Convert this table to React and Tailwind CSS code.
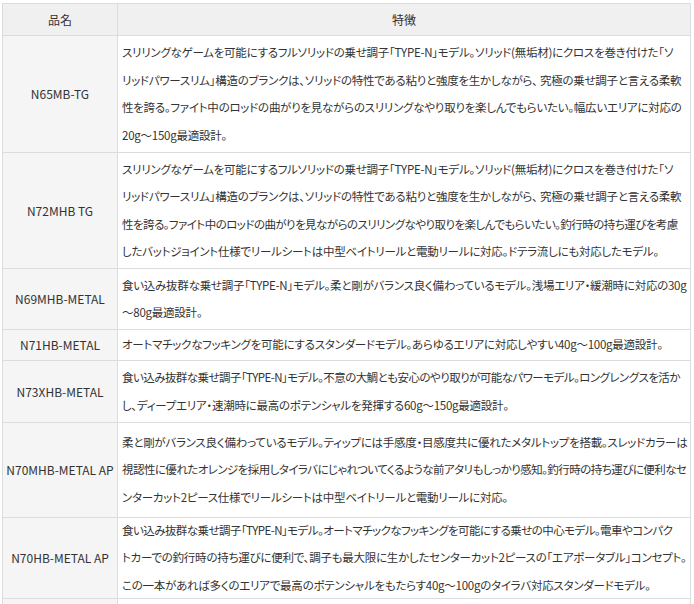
import React from 'react';

// lines prefixed with '~' are squeezed a little so they stay on one line like the reference
const rows = [
    {
        name: 'N65MB-TG',
        h: 'h-[116px]',
        lines: [
            'スリリングなゲームを可能にするフルソリッドの乗せ調子「TYPE-N」モデル。ソリッド(無垢材)にクロスを巻き付けた「ソ',
            'リッドパワースリム」構造のブランクは、ソリッドの特性である粘りと強度を生かしながら、 究極の乗せ調子と言える柔軟',
            '性を誇る。ファイト中のロッドの曲がりを見ながらのスリリングなやり取りを楽しんでもらいたい。幅広いエリアに対応の',
            '20g～150g最適設計。',
        ],
    },
    {
        name: 'N72MHB TG',
        h: 'h-[115px]',
        lines: [
            'スリリングなゲームを可能にするフルソリッドの乗せ調子「TYPE-N」モデル。ソリッド(無垢材)にクロスを巻き付けた「ソ',
            'リッドパワースリム」構造のブランクは、ソリッドの特性である粘りと強度を生かしながら、 究極の乗せ調子と言える柔軟',
            '~性を誇る。ファイト中のロッドの曲がりを見ながらのスリリングなやり取りを楽しんでもらいたい。釣行時の持ち運びを考慮',
            'したバットジョイント仕様でリールシートは中型ベイトリールと電動リールに対応。ドテラ流しにも対応したモデル。',
        ],
    },
    {
        name: 'N69MHB-METAL',
        h: 'h-[60px]',
        lines: [
            '食い込み抜群な乗せ調子「TYPE-N」モデル。柔と剛がバランス良く備わっているモデル。浅場エリア・緩潮時に対応の30g',
            '～80g最適設計。',
        ],
    },
    {
        name: 'N71HB-METAL',
        h: 'h-[30px]',
        lines: ['オートマチックなフッキングを可能にするスタンダードモデル。あらゆるエリアに対応しやすい40g～100g最適設計。'],
    },
    {
        name: 'N73XHB-METAL',
        h: 'h-[61px]',
        lines: [
            '~食い込み抜群な乗せ調子「TYPE-N」モデル。不意の大鯛とも安心のやり取りが可能なパワーモデル。ロングレングスを活か',
            'し、ディープエリア・速潮時に最高のポテンシャルを発揮する60g～150g最適設計。',
        ],
    },
    {
        name: 'N70MHB-METAL AP',
        h: 'h-[94px]',
        lines: [
            '柔と剛がバランス良く備わっているモデル。ティップには手感度・目感度共に優れたメタルトップを搭載。スレッドカラーは',
            '~視認性に優れたオレンジを採用しタイラバにじゃれついてくるような前アタリもしっかり感知。釣行時の持ち運びに便利なセ',
            'ンターカット2ピース仕様でリールシートは中型ベイトリールと電動リールに対応。',
        ],
    },
    {
        name: 'N70HB-METAL AP',
        h: 'h-[80px]',
        lines: [
            '~食い込み抜群な乗せ調子「TYPE-N」モデル。オートマチックなフッキングを可能にする乗せの中心モデル。電車やコンパク',
            'トカーでの釣行時の持ち運びに便利で、調子も最大限に生かしたセンターカット2ピースの「エアポータブル」コンセプト。',
            'この一本があれば多くのエリアで最高のポテンシャルをもたらす40g～100gのタイラバ対応スタンダードモデル。',
        ],
    },
    { name: '', h: 'h-[30px]', lines: [] },
];

export default function App() {
    return (
        <div className="min-h-screen bg-white pt-[3px] pl-[2px] text-[#333] text-[12px] font-['Noto_Sans_CJK_JP','Noto_Sans',sans-serif]">
            <div className="w-[689px] grid grid-cols-[115px_1fr] border-t border-l border-[#dcdcdc]">
                {/* Header */}
                <div className="h-[32px] flex items-center justify-center bg-[#f0f0f0] border-r border-b border-[#dcdcdc]">品名</div>
                <div className="h-[32px] flex items-center justify-center bg-[#f0f0f0] border-r border-b border-[#dcdcdc]">特徴</div>

                {rows.map((row, i) => (
                    <React.Fragment key={i}>
                        <div className={`${row.h} box-content flex items-center justify-center bg-[#f5f5f5] border-r border-b border-[#dcdcdc]`}>
                            {row.name}
                        </div>
                        <div className={`${row.h} box-content flex flex-col justify-center pl-[4px] bg-white border-r border-b border-[#dcdcdc] text-[11.5px] [font-feature-settings:'palt'] leading-[27.5px] whitespace-nowrap overflow-hidden`}>
                            {row.lines.map((line, j) =>
                                line.startsWith('~') ? (
                                    <div key={j} className="tracking-[-0.55px]">{line.slice(1)}</div>
                                ) : (
                                    <div key={j} className="tracking-[-0.25px]">{line}</div>
                                )
                            )}
                        </div>
                    </React.Fragment>
                ))}
            </div>
        </div>
    );
}
